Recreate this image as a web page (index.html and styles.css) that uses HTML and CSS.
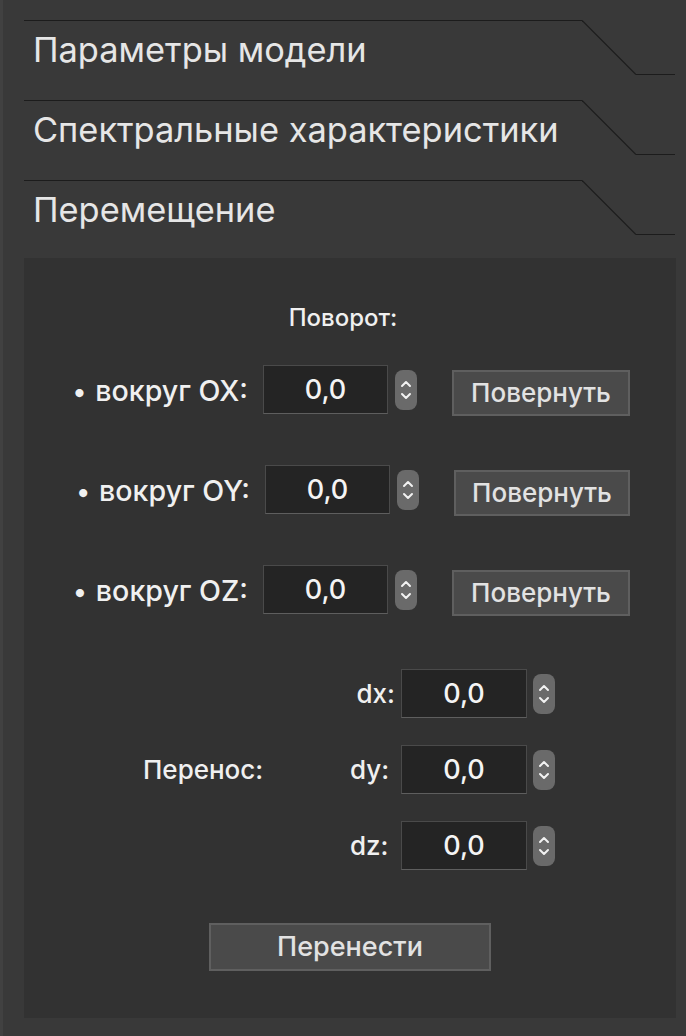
FILE: index.html
```html
<!DOCTYPE html>
<html lang="ru">
<head>
<meta charset="utf-8">
<title>Перемещение</title>
<link rel="stylesheet" href="styles.css">
</head>
<body>
<div class="window">
  <div class="tabs">
    <div class="tab">
      <div class="tab-title">Параметры модели</div>
      <svg class="tab-slope" width="54" height="80" viewBox="0 0 54 80"><path d="M0 0.5 L54 54.5" stroke="#1c1c1c" stroke-width="1.2" fill="none"/></svg>
      <div class="tab-end"></div>
    </div>
    <div class="tab">
      <div class="tab-title">Спектральные характеристики</div>
      <svg class="tab-slope" width="54" height="80" viewBox="0 0 54 80"><path d="M0 0.5 L54 54.5" stroke="#1c1c1c" stroke-width="1.2" fill="none"/></svg>
      <div class="tab-end"></div>
    </div>
    <div class="tab tab-last">
      <div class="tab-title">Перемещение</div>
      <svg class="tab-slope" width="54" height="80" viewBox="0 0 54 80"><path d="M0 0.5 L54 54.5" stroke="#1c1c1c" stroke-width="1.2" fill="none"/></svg>
      <div class="tab-end"></div>
    </div>
  </div>

  <div class="panel">
    <div class="section-title">Поворот:</div>

    <div class="rot-rows">
      <div class="rot-row">
        <div class="rot-label"><span class="bullet">•</span>вокруг OX:</div>
        <div class="field">0,0</div>
        <div class="spinner"><svg width="22" height="40" viewBox="0 0 22 40"><path d="M7 16 L11 12 L15 16" stroke="#f2f2f2" stroke-width="2" fill="none" stroke-linecap="round" stroke-linejoin="round"/><path d="M7 24 L11 28 L15 24" stroke="#f2f2f2" stroke-width="2" fill="none" stroke-linecap="round" stroke-linejoin="round"/></svg></div>
        <div class="btn btn-rot">Повернуть</div>
      </div>
      <div class="rot-row rot-row-shift">
        <div class="rot-label"><span class="bullet">•</span>вокруг OY:</div>
        <div class="field">0,0</div>
        <div class="spinner"><svg width="22" height="40" viewBox="0 0 22 40"><path d="M7 16 L11 12 L15 16" stroke="#f2f2f2" stroke-width="2" fill="none" stroke-linecap="round" stroke-linejoin="round"/><path d="M7 24 L11 28 L15 24" stroke="#f2f2f2" stroke-width="2" fill="none" stroke-linecap="round" stroke-linejoin="round"/></svg></div>
        <div class="btn btn-rot">Повернуть</div>
      </div>
      <div class="rot-row">
        <div class="rot-label"><span class="bullet">•</span>вокруг OZ:</div>
        <div class="field">0,0</div>
        <div class="spinner"><svg width="22" height="40" viewBox="0 0 22 40"><path d="M7 16 L11 12 L15 16" stroke="#f2f2f2" stroke-width="2" fill="none" stroke-linecap="round" stroke-linejoin="round"/><path d="M7 24 L11 28 L15 24" stroke="#f2f2f2" stroke-width="2" fill="none" stroke-linecap="round" stroke-linejoin="round"/></svg></div>
        <div class="btn btn-rot">Повернуть</div>
      </div>
    </div>

    <div class="move">
      <div class="move-label">Перенос:</div>
      <div class="move-rows">
        <div class="move-row">
          <div class="axis axis-x">dx:</div>
          <div class="field field-move">0,0</div>
          <div class="spinner spinner-move"><svg width="22" height="40" viewBox="0 0 22 40"><path d="M7 16 L11 12 L15 16" stroke="#f2f2f2" stroke-width="2" fill="none" stroke-linecap="round" stroke-linejoin="round"/><path d="M7 24 L11 28 L15 24" stroke="#f2f2f2" stroke-width="2" fill="none" stroke-linecap="round" stroke-linejoin="round"/></svg></div>
        </div>
        <div class="move-row">
          <div class="axis">dy:</div>
          <div class="field field-move">0,0</div>
          <div class="spinner spinner-move"><svg width="22" height="40" viewBox="0 0 22 40"><path d="M7 16 L11 12 L15 16" stroke="#f2f2f2" stroke-width="2" fill="none" stroke-linecap="round" stroke-linejoin="round"/><path d="M7 24 L11 28 L15 24" stroke="#f2f2f2" stroke-width="2" fill="none" stroke-linecap="round" stroke-linejoin="round"/></svg></div>
        </div>
        <div class="move-row">
          <div class="axis">dz:</div>
          <div class="field field-move">0,0</div>
          <div class="spinner spinner-move"><svg width="22" height="40" viewBox="0 0 22 40"><path d="M7 16 L11 12 L15 16" stroke="#f2f2f2" stroke-width="2" fill="none" stroke-linecap="round" stroke-linejoin="round"/><path d="M7 24 L11 28 L15 24" stroke="#f2f2f2" stroke-width="2" fill="none" stroke-linecap="round" stroke-linejoin="round"/></svg></div>
        </div>
      </div>
    </div>

    <div class="move-action">
      <div class="btn btn-move">Перенести</div>
    </div>
  </div>
</div>
</body>
</html>
```

FILE: styles.css
```css
* { box-sizing: border-box; }

html, body {
  margin: 0;
  padding: 0;
  background: #393939;
}

body {
  width: 686px;
  height: 1036px;
  overflow: hidden;
  font-family: "Inter", "Noto Sans", sans-serif;
  color: #ececec;
}

.window {
  height: 1036px;
  border-left: 3px solid #414141;
  padding-top: 20px;
  padding-left: 21px;
}

.tabs {
  display: flex;
  flex-direction: column;
}

.tab {
  display: flex;
  height: 80px;
  align-items: flex-start;
}

.tab-last {
  height: 78px;
}

.tab-title {
  width: 558px;
  height: 100%;
  border-top: 1px solid #1c1c1c;
  padding-left: 9px;
  padding-top: 9px;
  font-size: 34.4px;
  line-height: 40px;
  color: #e6e6e6;
  white-space: nowrap;
}

.tab-slope {
  display: block;
  flex: none;
}

.tab-end {
  width: 39px;
  height: 55px;
  border-bottom: 1px solid #1c1c1c;
}

.panel {
  width: 652px;
  height: 760px;
  background: #323232;
  padding-top: 48px;
}

.section-title {
  text-align: center;
  font-size: 24px;
  font-weight: 500;
  line-height: 24px;
  padding-right: 14px;
  color: #f0f0f0;
}

.rot-rows {
  margin-top: 35px;
  display: flex;
  flex-direction: column;
  gap: 51px;
}

.rot-row {
  display: flex;
  align-items: flex-start;
  height: 49px;
}

.rot-row-shift {
  padding-left: 2px;
}

.rot-label {
  width: 224px;
  margin-right: 15px;
  text-align: right;
  font-size: 28.6px;
  font-weight: 500;
  line-height: 51px;
  color: #f0f0f0;
  white-space: nowrap;
}

.bullet {
  font-size: 26px;
  margin-right: 9px;
}

.field {
  width: 125px;
  height: 49px;
  background: #242424;
  border: 1px solid #4a4a4a;
  border-bottom-color: #5e5e5e;
  text-align: center;
  font-size: 27px;
  font-weight: 500;
  line-height: 47px;
  color: #f4f4f4;
}

.spinner {
  margin-left: 7px;
  margin-top: 5px;
  width: 22px;
  height: 40px;
  border-radius: 8px;
  background: #6a6a6a;
  flex: none;
}

.spinner svg {
  display: block;
}

.btn {
  background: #4a4a4a;
  border: 2px solid #5f5f5f;
  color: #e2e2e2;
  text-align: center;
  font-weight: 500;
}

.btn-rot {
  margin-left: 35px;
  margin-top: 5px;
  width: 178px;
  height: 46px;
  font-size: 26px;
  line-height: 42px;
}

.rot-row-shift .btn-rot {
  width: 176px;
}

.move {
  margin-top: 55px;
  display: flex;
  align-items: center;
}

.move-label {
  width: 326px;
  padding-left: 119px;
  font-size: 26px;
  font-weight: 500;
  color: #f0f0f0;
}

.move-rows {
  display: flex;
  flex-direction: column;
  gap: 27px;
}

.move-row {
  display: flex;
  align-items: flex-start;
  height: 49px;
}

.axis {
  width: 51px;
  padding-right: 13px;
  text-align: right;
  font-size: 26px;
  font-weight: 500;
  line-height: 49px;
  color: #f0f0f0;
}

.axis-x {
  padding-right: 6px;
}

.field-move {
  width: 126px;
}

.spinner-move {
  margin-left: 6px;
}

.move-action {
  margin-top: 53px;
  display: flex;
  justify-content: center;
}

.btn-move {
  width: 282px;
  height: 48px;
  font-size: 27px;
  line-height: 44px;
}
```
